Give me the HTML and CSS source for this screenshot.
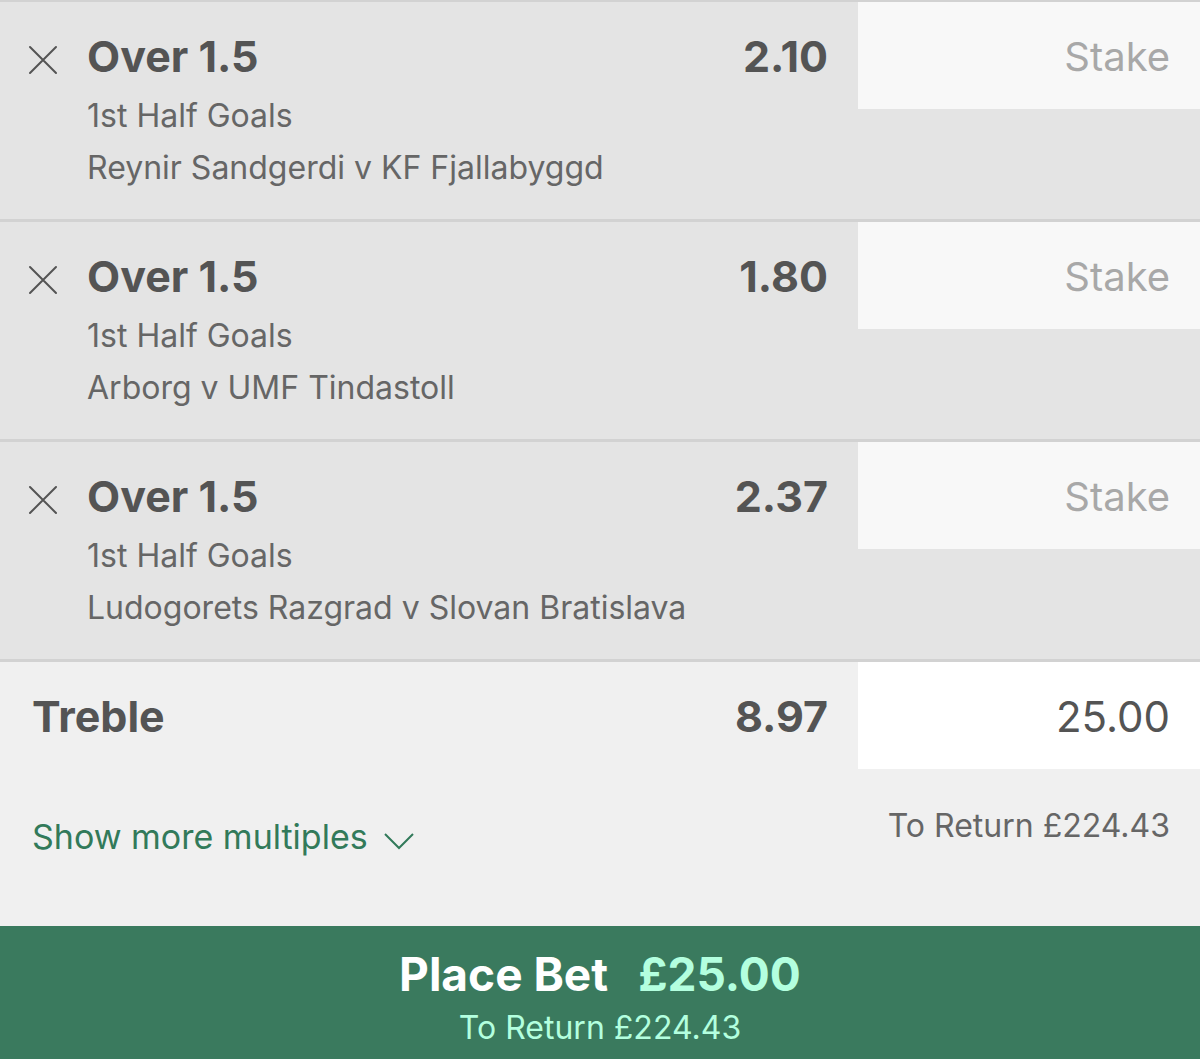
FILE: index.html
```html
<!DOCTYPE html>
<html lang="en">
<head>
<meta charset="utf-8">
<meta name="viewport" content="width=device-width, initial-scale=1">
<title>Bet slip</title>
<link rel="stylesheet" href="styles.css">
</head>
<body>
<form class="slip">
  <section class="selection">
    <button class="remove" type="button" aria-label="Remove Reynir Sandgerdi v KF Fjallabyggd"><svg viewBox="0 0 30 30" aria-hidden="true"><path d="M2 2 28 28M28 2 2 28"/></svg></button>
    <div class="details">
      <h2 class="pick">Over 1.5</h2>
      <p class="market">1st Half Goals</p>
      <p class="fixture">Reynir Sandgerdi v KF Fjallabyggd</p>
    </div>
    <span class="odds">2.10</span>
    <input class="stake" type="text" inputmode="decimal" placeholder="Stake" aria-label="Stake on Reynir Sandgerdi v KF Fjallabyggd">
  </section>
  <section class="selection">
    <button class="remove" type="button" aria-label="Remove Arborg v UMF Tindastoll"><svg viewBox="0 0 30 30" aria-hidden="true"><path d="M2 2 28 28M28 2 2 28"/></svg></button>
    <div class="details">
      <h2 class="pick">Over 1.5</h2>
      <p class="market">1st Half Goals</p>
      <p class="fixture">Arborg v UMF Tindastoll</p>
    </div>
    <span class="odds">1.80</span>
    <input class="stake" type="text" inputmode="decimal" placeholder="Stake" aria-label="Stake on Arborg v UMF Tindastoll">
  </section>
  <section class="selection">
    <button class="remove" type="button" aria-label="Remove Ludogorets Razgrad v Slovan Bratislava"><svg viewBox="0 0 30 30" aria-hidden="true"><path d="M2 2 28 28M28 2 2 28"/></svg></button>
    <div class="details">
      <h2 class="pick">Over 1.5</h2>
      <p class="market">1st Half Goals</p>
      <p class="fixture">Ludogorets Razgrad v Slovan Bratislava</p>
    </div>
    <span class="odds">2.37</span>
    <input class="stake" type="text" inputmode="decimal" placeholder="Stake" aria-label="Stake on Ludogorets Razgrad v Slovan Bratislava">
  </section>
  <section class="multiples">
    <div class="treble">
      <label class="pick" for="treble-stake">Treble</label>
      <span class="odds">8.97</span>
      <input class="stake stake-filled" id="treble-stake" type="text" inputmode="decimal" value="25.00">
    </div>
    <div class="summary">
      <button class="more" type="button">Show more multiples <svg viewBox="0 0 30 18" aria-hidden="true"><path d="M1 1 15 15 29 1"/></svg></button>
      <p class="returns">To Return £224.43</p>
    </div>
  </section>
  <button class="place" type="submit">
    <span class="place-title">Place Bet <span class="amount">£25.00</span></span>
    <span class="place-returns">To Return £224.43</span>
  </button>
</form>
</body>
</html>
```

FILE: styles.css
```css
* { box-sizing: border-box; }

body {
  margin: 0;
  background: #f0f0f0;
  color: #545454;
  font-family: Inter, "Liberation Sans", sans-serif;
  font-size: 32px;
}

h2, p { margin: 0; }

button, input {
  font: inherit;
  color: inherit;
  border: 0;
  border-radius: 0;
}

button {
  padding: 0;
  background: none;
  cursor: pointer;
}

svg {
  fill: none;
  stroke: currentColor;
}

.slip {
  display: flex;
  flex-direction: column;
  min-height: 100vh;
  border-top: 2px solid #d2d2d2;
}

.selection {
  display: flex;
  align-items: flex-start;
  min-height: 220px;
  border-bottom: 3px solid #d2d2d2;
  background: #e4e4e4;
}

.remove {
  width: 87px;
  height: 116px;
  padding-left: 28px;
  text-align: left;
}

.remove svg {
  display: block;
  width: 30px;
  height: 30px;
  stroke-width: 2;
  stroke-linecap: round;
}

.details {
  flex: 1;
  color: #666;
}

.pick, .odds {
  color: #545454;
  font-size: 43px;
  font-weight: 700;
  line-height: 108px;
}

.details .pick { height: 88px; }

.market, .fixture { line-height: 52px; }

.stake {
  width: 342px;
  height: 107px;
  margin-left: 30px;
  padding: 2px 30px 0;
  background: #f8f8f8;
  font-size: 40px;
  text-align: right;
}

.stake::placeholder {
  color: #a8a8a8;
  opacity: 1;
}

.multiples { flex: 1; }

.treble {
  display: flex;
  align-items: flex-start;
}

.treble .pick {
  flex: 1;
  padding-left: 32px;
}

.stake-filled {
  background: #fff;
  font-size: 42px;
}

.summary {
  display: flex;
  justify-content: space-between;
  padding: 30px 30px 0 32px;
}

.more {
  display: flex;
  align-items: center;
  gap: 16px;
  height: 72px;
  color: #327a5a;
  font-size: 34px;
}

.more svg {
  width: 30px;
  height: 18px;
  margin-top: 12px;
  stroke-width: 2;
}

.returns {
  color: #666;
  line-height: 52px;
}

.place {
  display: flex;
  flex-direction: column;
  align-items: center;
  height: 133px;
  padding-top: 22px;
  background: #3a7a5e;
  color: #b3ffdf;
}

.place-title {
  display: flex;
  gap: 30px;
  color: #fff;
  font-size: 46px;
  font-weight: 700;
  line-height: 52px;
}

.amount { color: #b3ffdf; }

.place-returns { line-height: 56px; }
```
